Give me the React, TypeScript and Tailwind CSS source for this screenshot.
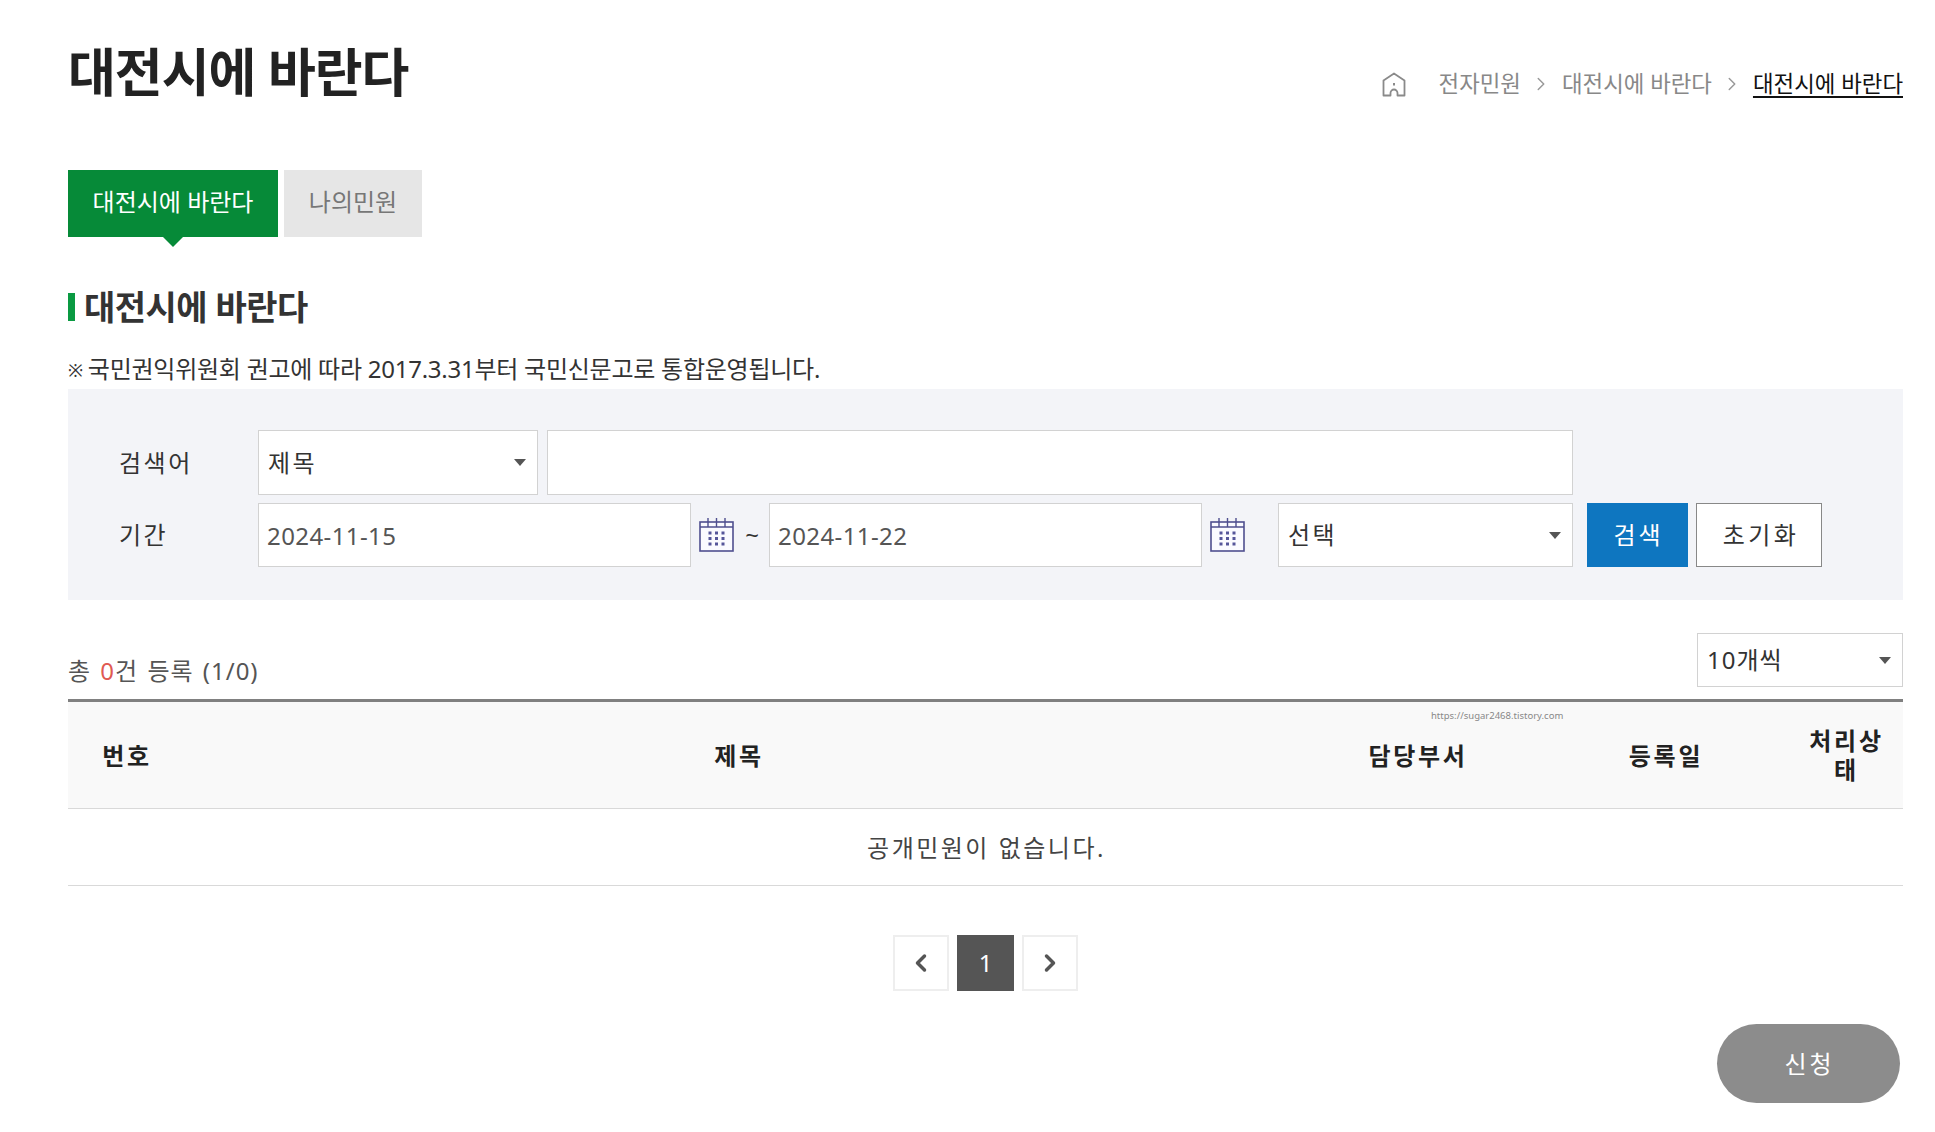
import { ChevronLeft, ChevronRight } from "lucide-react";

const columns = ["번호", "제목", "담당부서", "등록일", "처리상태"];

function Caret() {
  return <span className="w-0 h-0 border-x-[6px] border-x-transparent border-t-[7px] border-t-[#555]" />;
}

function Select({ label, className }: { label: string; className: string }) {
  return (
    <div className={`flex items-center justify-between bg-white border border-[#d2d2d2] pl-[9px] pr-[11px] ${className}`}>
      <span>{label}</span>
      <Caret />
    </div>
  );
}

function CalendarIcon() {
  return (
    <svg width="36" height="36" viewBox="0 0 36 36" fill="none" className="shrink-0">
      <rect x="1" y="5" width="33" height="29" fill="#fafaff" stroke="#4f4f8f" strokeWidth="1.6" />
      <path d="M1 10h33" stroke="#4f4f8f" strokeWidth="1.4" />
      <path d="M9 1v9M17.5 1v9M26 1v9" stroke="#4f4f8f" strokeWidth="1.4" />
      {[11, 17.5, 24].map((x) =>
        [16, 21.5, 27].map((y) => <rect key={`${x}-${y}`} x={x - 1.5} y={y - 1.5} width="3" height="3" fill="#55559a" />)
      )}
    </svg>
  );
}

function HomeIcon() {
  return (
    <svg width="24" height="25" viewBox="0 0 24 25" fill="none" stroke="#8a8a8a" strokeWidth="1.8">
      <path d="M1.5 8.5 12 1.5l10.5 7V23.5H15.5V21a3.5 3.5 0 0 0-7 0v2.5H1.5z" strokeLinejoin="round" />
      <rect x="11" y="11" width="2" height="2.5" fill="#8a8a8a" stroke="none" />
    </svg>
  );
}

export default function App() {
  return (
    <div className="relative min-h-[1132px] bg-white pl-[68px] pr-[32px] text-[#333] text-[24px] font-['Noto_Sans','Noto_Sans_CJK_KR',sans-serif]">
      <div className="flex items-start justify-between pt-[36px]">
        <h1 className="text-[52px] leading-[72px] font-bold tracking-[-1px] text-[#222]">대전시에 바란다</h1>
        <nav className="flex items-center mt-[32px] text-[22.4px] leading-[32px] text-[#888]">
          <HomeIcon />
          <span className="ml-[33px]">전자민원</span>
          <ChevronRight size={22} strokeWidth={1.6} className="mx-[9.5px] text-[#999]" />
          <span>대전시에 바란다</span>
          <ChevronRight size={22} strokeWidth={1.6} className="mx-[9.5px] text-[#999]" />
          <span className="text-[#111] underline underline-offset-[4px]">대전시에 바란다</span>
        </nav>
      </div>

      <div className="flex gap-[6px] mt-[62px]">
        <div className="relative w-[210px] h-[67px] pb-[3px] flex items-center justify-center bg-[#068a38] text-white">
          대전시에 바란다
          <span className="absolute top-full left-1/2 -translate-x-1/2 w-0 h-0 border-x-[10px] border-x-transparent border-t-[10px] border-t-[#068a38]" />
        </div>
        <div className="w-[138px] h-[67px] pb-[3px] flex items-center justify-center bg-[#e6e6e6] text-[#777]">나의민원</div>
      </div>

      <h2 className="flex items-center gap-[9px] mt-[45px] text-[34px] leading-[50px] font-bold tracking-[-0.5px] text-[#333]">
        <span className="w-[7px] h-[28px] bg-[#0a9a42]" />
        대전시에 바란다
      </h2>

      <p className="mt-[19px] h-[36px] leading-[36px] tracking-[-0.25px]">
        <span className="text-[18px] mr-[5px] align-[1px]">※</span>국민권익위원회 권고에 따라 2017.3.31부터 국민신문고로 통합운영됩니다.
      </p>

      <section className="mt-[2px] h-[211px] bg-[#f3f4f8] pt-[41px] pl-[51px]">
        <div className="flex items-center h-[65px]">
          <span className="w-[139px] tracking-[2.5px]">검색어</span>
          <Select label="제목" className="w-[280px] h-[65px] tracking-[2.5px]" />
          <input
            aria-label="검색어"
            className="ml-[9px] w-[1026px] h-[65px] bg-white border border-[#d2d2d2]"
          />
        </div>
        <div className="flex items-center h-[64px] mt-[8px]">
          <span className="w-[139px] tracking-[2.5px]">기간</span>
          <input
            readOnly
            value="2024-11-15"
            className="w-[433px] h-[64px] bg-white border border-[#d2d2d2] px-[8px] tracking-[0.4px] text-[#555]"
          />
          <span className="ml-[8px]"><CalendarIcon /></span>
          <span className="w-[34px] text-center">~</span>
          <input
            readOnly
            value="2024-11-22"
            className="w-[433px] h-[64px] bg-white border border-[#d2d2d2] px-[8px] tracking-[0.4px] text-[#555]"
          />
          <span className="ml-[8px]"><CalendarIcon /></span>
          <Select label="선택" className="ml-[32px] w-[295px] h-[64px] tracking-[2.5px]" />
          <button className="ml-[14px] w-[101px] h-[64px] pl-[2px] bg-[#0e76c0] text-white tracking-[3px]">검색</button>
          <button className="ml-[8px] w-[126px] h-[64px] pl-[4px] bg-white border border-[#888] tracking-[3.5px]">초기화</button>
        </div>
      </section>

      <div className="flex items-end justify-between mt-[33px] h-[54px]">
        <p className="leading-[32px] tracking-[1px] [word-spacing:2px] text-[#555]">
          총 <span className="text-[#e05a52]">0</span>건 등록 (1/0)
        </p>
        <Select label="10개씩" className="w-[206px] h-[54px] tracking-[1px]" />
      </div>

      <div className="relative mt-[12px] border-t-[3px] border-[#808080]">
        <span className="absolute left-[1363px] top-[8px] text-[9.5px] leading-[12px] text-[#888]">https://sugar2468.tistory.com</span>
        <div className="grid grid-cols-[116px_1108px_250px_246px_115px] items-center h-[107px] bg-[#f9f9f9] border-b border-[#d9d9d9] font-bold text-[#222]">
          {columns.map((c) => (
            <div key={c} className="pl-[14px] pr-[12px] text-center leading-[29px] tracking-[2.7px] break-all">
              {c}
            </div>
          ))}
        </div>
        <div className="h-[77px] pt-[1px] pl-[2px] flex items-center justify-center border-b border-[#d9d9d9] tracking-[2.5px] text-[#444]">
          공개민원이 없습니다.
        </div>
      </div>

      <div className="flex justify-center gap-[8px] mt-[49px]">
        <button aria-label="이전" className="w-[56px] h-[56px] flex items-center justify-center border-2 border-[#eee] text-[#555]">
          <ChevronLeft size={28} strokeWidth={3} />
        </button>
        <button className="w-[57px] h-[56px] bg-[#555] text-white">1</button>
        <button aria-label="다음" className="w-[56px] h-[56px] flex items-center justify-center border-2 border-[#eee] text-[#555]">
          <ChevronRight size={28} strokeWidth={3} />
        </button>
      </div>

      <div className="flex justify-end mt-[33px] pr-[3px]">
        <button className="w-[183px] h-[79px] pl-[2px] rounded-[40px] bg-[#8c8c8c] text-white tracking-[3px]">신청</button>
      </div>
    </div>
  );
}
